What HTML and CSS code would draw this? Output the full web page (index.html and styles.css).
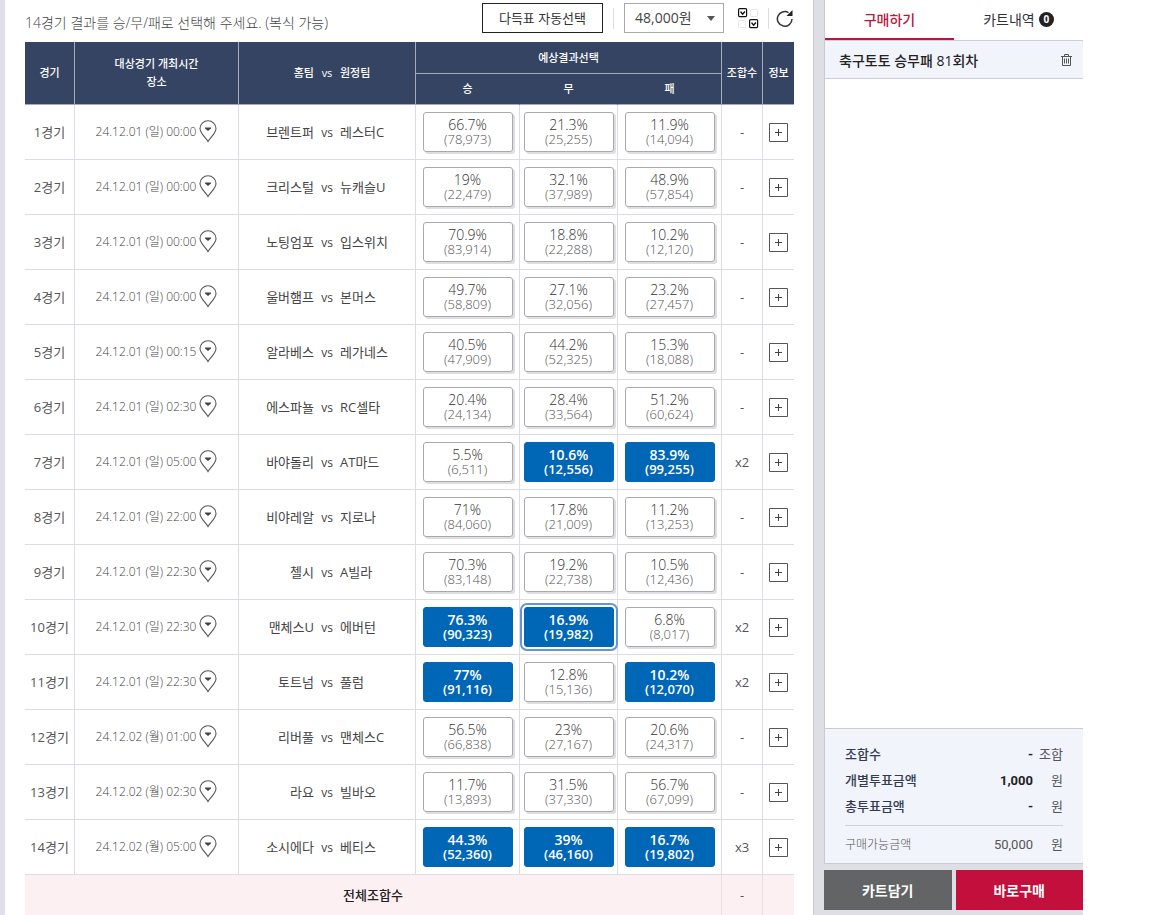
FILE: index.html
```html
<!DOCTYPE html>
<html lang="ko">
<head>
  <meta charset="UTF-8">
  <meta name="viewport" content="width=device-width, initial-scale=1.0">
  <title>축구토토 승무패</title>
  <link rel="stylesheet" href="styles.css">
</head>
<body>

<!-- Shared icons -->
<svg class="sprite" aria-hidden="true">
  <symbol id="icon-pin" viewBox="0 0 18 23">
    <path d="M9 21.5C7.2 17.6 1 13.6 1 8.4a8 7.6 0 0 1 16 0C17 13.6 10.800 17.600 9 21.500Z" fill="none" stroke="#555" stroke-width="1.1"/>
    <path d="M6 7.500h6v1L9 11 6 8.500Z" fill="#444"/>
  </symbol>
  <symbol id="icon-plus" viewBox="0 0 19 19">
    <path d="M.5.5h18v18H.5Z" fill="#fff" stroke="#555"/>
    <path d="M6 9.500h7M9.500 6v7" stroke="#444"/>
  </symbol>
</svg>

<div class="page">
  <!-- Match table -->
  <main class="board">
    <div class="toolbar">
      <p class="guide">14경기 결과를 승/무/패로 선택해 주세요. (복식 가능)</p>
      <button type="button" class="btn-auto">다득표 자동선택</button>
      <span class="divider"></span>
      <div class="amount">
        <select aria-label="금액 선택">
          <option>48,000원</option>
        </select>
      </div>
      <button type="button" class="icon-btn btn-random" aria-label="랜덤 선택">
        <svg width="21" height="21" viewBox="0 0 21 21" fill="none">
          <rect x="12.500" y="1.500" width="7" height="7" rx="1" stroke="#e6e6e6"/>
          <rect x=".5" y="12.500" width="7" height="7" rx="1" stroke="#e6e6e6"/>
          <rect x=".6" y=".6" width="8" height="8" rx="1" stroke="#111" stroke-width="1.200"/>
          <rect x="11.600" y="11.600" width="8" height="8" rx="1" stroke="#111" stroke-width="1.200"/>
          <path d="m2.500 3.600 2.100 2.600 2.300-2.600M13.500 14.600l2.100 2.600 2.300-2.600" stroke="#111" stroke-width="1.500"/>
        </svg>
      </button>
      <span class="divider"></span>
      <button type="button" class="icon-btn btn-reset" aria-label="초기화">
        <svg width="18" height="19" viewBox="0 0 18 19" fill="none">
          <path d="M12.500 3.700A7.300 7.300 0 1 0 16 10" stroke="#333" stroke-width="1.500"/>
          <path d="M16.500 1v6H10.500Z" fill="#222"/>
        </svg>
      </button>
    </div>

    <table class="match-table">
      <colgroup>
        <col class="col-no">
        <col class="col-time">
        <col class="col-team">
        <col class="col-side">
        <col class="col-draw">
        <col class="col-side">
        <col class="col-combo">
        <col class="col-info">
      </colgroup>
      <thead>
        <tr>
          <th rowspan="2">경기</th>
          <th rowspan="2">대상경기 개최시간<br>장소</th>
          <th rowspan="2"><div class="teams"><span>홈팀</span><span>vs</span><span>원정팀</span></div></th>
          <th colspan="3" class="group">예상결과선택</th>
          <th rowspan="2">조합수</th>
          <th rowspan="2">정보</th>
        </tr>
        <tr>
          <th class="sub">승</th>
          <th class="sub">무</th>
          <th>패</th>
        </tr>
      </thead>
      <tbody id="matches"></tbody>
      <tfoot>
        <tr>
          <td colspan="6" class="total">전체조합수</td>
          <td>-</td>
          <td></td>
        </tr>
      </tfoot>
    </table>
  </main>

  <!-- Purchase slip -->
  <aside class="slip">
    <nav class="tabs">
      <a href="#buy" class="tab active">구매하기</a>
      <a href="#cart" class="tab">카트내역 <span class="count">0</span></a>
    </nav>
    <div class="slip-title">
      <h2>축구토토 승무패 81회차</h2>
      <button type="button" class="icon-btn" aria-label="삭제">
        <svg width="11" height="12" viewBox="0 0 11 12" fill="none" stroke="#555">
          <path d="M0 2.500h11M3.500 2V.5h4V2M1.500 3v8.500h8V3M3.500 4.500v5M5.500 4.500v5M7.500 4.500v5"/>
        </svg>
      </button>
    </div>
    <div class="slip-body"></div>
    <dl class="summary">
      <div class="sum-row"><dt>조합수</dt><dd><b>-</b><span>조합</span></dd></div>
      <div class="sum-row"><dt>개별투표금액</dt><dd><b>1,000</b><span>원</span></dd></div>
      <div class="sum-row"><dt>총투표금액</dt><dd><b>-</b><span>원</span></dd></div>
      <div class="sum-row balance"><dt>구매가능금액</dt><dd>50,000<span>원</span></dd></div>
    </dl>
    <div class="slip-actions">
      <button type="button" class="btn-cart">카트담기</button>
      <button type="button" class="btn-buy">바로구매</button>
    </div>
  </aside>
</div>

<script src="script.js"></script>
</body>
</html>
```
FILE: styles.css
```css
/* Global Styles */
* {
  box-sizing: border-box;
}

body {
  margin: 0;
  background-color: #fff;
  color: #555;
  font-family: "Open Sans", "Noto Sans CJK KR", sans-serif;
  font-size: 13px;
}

button,
select {
  font-family: inherit;
  cursor: pointer;
}

.sprite {
  display: none;
}

.page {
  display: grid;
  grid-template-columns: minmax(0, 1fr) 270px;
  min-height: 100vh;
  padding-right: 69px;
}

.board {
  padding: 0 19px 0 20px;
  border-left: 5px solid #dfdeea;
}

/* Toolbar */
.toolbar {
  display: flex;
  align-items: center;
  height: 42px;
  padding-bottom: 6px;
}

.guide {
  flex: 1;
  margin: 0;
  padding-top: 8px;
  color: #444;
  font-size: 14px;
  font-weight: 300;
  white-space: nowrap;
}

.btn-auto {
  width: 121px;
  height: 30px;
  padding: 0 0 2px;
  border: 1px solid #222;
  background-color: #fff;
  color: #333;
  font-size: 13px;
}

.divider {
  width: 1px;
  height: 21px;
  margin: 0 10px;
  background-color: #ddd;
}

.amount {
  position: relative;
}

.amount select {
  width: 100px;
  height: 30px;
  padding: 0 10px 2px;
  border: 1px solid #aaa;
  border-radius: 0;
  background-color: #fff;
  color: #444;
  font-size: 14px;
  appearance: none;
}

.amount::after {
  content: "";
  position: absolute;
  top: 13px;
  right: 9px;
  border: 4px solid transparent;
  border-top: 5px solid #555;
  border-bottom: 0;
  pointer-events: none;
}

.icon-btn {
  display: flex;
  padding: 0;
  border: none;
  background: none;
}

.btn-random {
  margin-left: 14px;
}

.btn-random + .divider {
  margin: 0 7px 0 9px;
}

/* Match Table */
.match-table {
  width: 100%;
  border-collapse: separate;
  border-spacing: 0;
  table-layout: fixed;
  text-align: center;
}

.col-no {
  width: 50px;
}

.col-time {
  width: 164px;
}

.col-side {
  width: 104px;
}

.col-draw {
  width: 98px;
}

.col-combo {
  width: 41px;
}

.col-info {
  width: 31px;
}

.match-table th,
.match-table td {
  padding: 0;
  border-right: 1px solid #dcdce2;
  border-bottom: 1px solid #dcdce2;
}

.match-table th {
  height: 31px;
  border-color: #a3abbc;
  background-color: #354463;
  color: #fff;
  font-size: 11px;
  font-weight: 500;
  line-height: 18px;
}

.match-table .group {
  height: 32px;
}

.match-table .sub {
  border-right-color: #354463;
}

.match-table tbody td {
  height: 55px;
}

.match-table tbody .label {
  padding-bottom: 2px;
}

.match-table tr > :last-child {
  border-right: none;
}

.match-table thead tr + tr > :last-child {
  border-right: 1px solid #a3abbc;
}

.match-table .time {
  color: #444;
  font-size: 12px;
  font-weight: 300;
}

.time div {
  display: flex;
  justify-content: center;
  align-items: center;
  gap: 3px;
}

.teams {
  display: grid;
  grid-template-columns: 1fr 26px 1fr;
  align-items: baseline;
}

.teams :first-child {
  text-align: right;
}

.teams :last-child {
  text-align: left;
}

tbody .teams {
  color: #444;
}

tbody .teams :nth-child(2) {
  font-size: 12px;
}

/* Pick Buttons */
.pick {
  display: inline-block;
  width: 90px;
  height: 40px;
  padding: 0;
  border: 1px solid #aaa;
  border-radius: 3px;
  background-color: #fff;
  box-shadow: 2px 2px 0 #dedee2;
  color: #333;
  font-size: 14px;
  font-weight: 300;
  line-height: 14px;
  vertical-align: middle;
}

.pick span {
  display: block;
  font-size: 13px;
  color: #555;
}

.pick.selected {
  border-color: #0066b6;
  background-color: #0066b6;
  box-shadow: none;
  color: #fff;
  font-weight: 600;
}

.pick.selected span {
  color: #fff;
}

.pick.focused {
  outline: 2px solid #6494dc;
  outline-offset: 2px;
}

.info .icon-btn {
  justify-content: center;
  width: 100%;
}

.match-table tfoot td {
  height: 40px;
  border-bottom: none;
  border-color: #ecdde2;
  background-color: #fdf0f3;
}

.match-table .total {
  padding-bottom: 2px;
  color: #222;
  font-weight: 500;
}

/* Purchase Slip */
.slip {
  position: sticky;
  top: 0;
  display: flex;
  flex-direction: column;
  height: 100vh;
  padding: 0 0 5px 10px;
  border-left: 1px solid #c9cad3;
  background-color: #dedfe5;
}

.tabs {
  display: grid;
  grid-template-columns: 1fr 1fr;
  border-left: 1px solid #c9cad3;
  border-bottom: 1px solid #c9cfdc;
  background-color: #fff;
}

.tab {
  display: flex;
  justify-content: center;
  align-items: center;
  gap: 4px;
  height: 40px;
  border-bottom: 2px solid #fff;
  color: #333;
  font-size: 14px;
  text-decoration: none;
}

.tab.active {
  border-color: #b5173f;
  color: #b5173f;
  font-weight: 500;
}

.count {
  width: 15px;
  height: 15px;
  border-radius: 50%;
  background-color: #222;
  color: #fff;
  font-size: 10px;
  font-weight: 700;
  line-height: 15px;
  text-align: center;
}

.slip-title {
  display: flex;
  justify-content: space-between;
  align-items: center;
  height: 38px;
  padding: 0 11px 0 14px;
  border-left: 1px solid #c9cad3;
  border-bottom: 1px solid #c9cfdc;
  background-color: #f1f4fb;
}

.slip-title h2 {
  margin: 0;
  color: #222;
  font-size: 14px;
  font-weight: 500;
}

.slip-body {
  flex: 1;
  border-left: 1px solid #c9cad3;
  background-color: #fff;
}

.summary {
  margin: 0;
  padding: 12px 20px 0;
  border: 1px solid #c9cad3;
  border-right: none;
  background-color: #f1f4fb;
}

.sum-row {
  display: flex;
  justify-content: space-between;
  align-items: center;
  height: 26px;
  padding-bottom: 2px;
  color: #333b50;
}

.sum-row dt {
  font-weight: 500;
}

.sum-row dd {
  display: flex;
  align-items: baseline;
  margin: 0;
  font-family: Roboto, "Noto Sans CJK KR", sans-serif;
}

.sum-row dd b {
  color: #222;
}

.sum-row dd span {
  width: 30px;
  color: #555;
  text-align: right;
}

.sum-row.balance {
  height: 38px;
  margin-top: 6px;
  border-top: 1px solid #cfd2da;
  color: #555;
}

.balance dt {
  font-size: 12px;
  font-weight: 300;
}

.slip-actions {
  display: grid;
  grid-template-columns: 1fr 1fr;
  gap: 4px;
  margin-top: 6px;
}

.slip-actions button {
  height: 40px;
  padding: 0;
  border: none;
  color: #fff;
  font-size: 14px;
  font-weight: 700;
}

.btn-cart {
  background-color: #636466;
}

.btn-buy {
  background-color: #c20f3b;
}
```
FILE: script.js
```javascript
// date, home, away, [percent, votes] for win / draw / loss, selected picks
const matches = [
  ['24.12.01 (일) 00:00', '브렌트퍼', '레스터C', ['66.7%', '78,973'], ['21.3%', '25,255'], ['11.9%', '14,094'], []],
  ['24.12.01 (일) 00:00', '크리스털', '뉴캐슬U', ['19%', '22,479'], ['32.1%', '37,989'], ['48.9%', '57,854'], []],
  ['24.12.01 (일) 00:00', '노팅엄포', '입스위치', ['70.9%', '83,914'], ['18.8%', '22,288'], ['10.2%', '12,120'], []],
  ['24.12.01 (일) 00:00', '울버햄프', '본머스', ['49.7%', '58,809'], ['27.1%', '32,056'], ['23.2%', '27,457'], []],
  ['24.12.01 (일) 00:15', '알라베스', '레가네스', ['40.5%', '47,909'], ['44.2%', '52,325'], ['15.3%', '18,088'], []],
  ['24.12.01 (일) 02:30', '에스파뇰', 'RC셀타', ['20.4%', '24,134'], ['28.4%', '33,564'], ['51.2%', '60,624'], []],
  ['24.12.01 (일) 05:00', '바야돌리', 'AT마드', ['5.5%', '6,511'], ['10.6%', '12,556'], ['83.9%', '99,255'], [1, 2]],
  ['24.12.01 (일) 22:00', '비야레알', '지로나', ['71%', '84,060'], ['17.8%', '21,009'], ['11.2%', '13,253'], []],
  ['24.12.01 (일) 22:30', '첼시', 'A빌라', ['70.3%', '83,148'], ['19.2%', '22,738'], ['10.5%', '12,436'], []],
  ['24.12.01 (일) 22:30', '맨체스U', '에버턴', ['76.3%', '90,323'], ['16.9%', '19,982'], ['6.8%', '8,017'], [0, 1]],
  ['24.12.01 (일) 22:30', '토트넘', '풀럼', ['77%', '91,116'], ['12.8%', '15,136'], ['10.2%', '12,070'], [0, 2]],
  ['24.12.02 (월) 01:00', '리버풀', '맨체스C', ['56.5%', '66,838'], ['23%', '27,167'], ['20.6%', '24,317'], []],
  ['24.12.02 (월) 02:30', '라요', '빌바오', ['11.7%', '13,893'], ['31.5%', '37,330'], ['56.7%', '67,099'], []],
  ['24.12.02 (월) 05:00', '소시에다', '베티스', ['44.3%', '52,360'], ['39%', '46,160'], ['16.7%', '19,802'], [0, 1, 2]]
];

// match and pick that was clicked last
let focused = [9, 1];

function render() {
  document.getElementById('matches').innerHTML = matches.map((match, row) => {
    const [date, home, away, win, draw, loss, selected] = match;
    const picks = [win, draw, loss].map(([percent, votes], i) => {
      const on = selected.includes(i);
      const focus = focused[0] === row && focused[1] === i;
      return `<td><button type="button" class="pick${on ? ' selected' : ''}${focus ? ' focused' : ''}" data-row="${row}" data-pick="${i}" aria-pressed="${on}">${percent}<span>(${votes})</span></button></td>`;
    }).join('');
    return `<tr>
      <td class="label">${row + 1}경기</td>
      <td class="label time"><div>${date}<svg width="18" height="23"><use href="#icon-pin"/></svg></div></td>
      <td class="label"><div class="teams"><span>${home}</span><span>vs</span><span>${away}</span></div></td>
      ${picks}
      <td>${selected.length ? 'x' + selected.length : '-'}</td>
      <td class="info"><button type="button" class="icon-btn" aria-label="${row + 1}경기 정보"><svg width="19" height="19"><use href="#icon-plus"/></svg></button></td>
    </tr>`;
  }).join('');
}

document.getElementById('matches').addEventListener('click', (e) => {
  const button = e.target.closest('.pick');
  if (!button) return;
  const row = Number(button.dataset.row);
  const pick = Number(button.dataset.pick);
  const selected = matches[row][6];
  const index = selected.indexOf(pick);
  if (index >= 0) {
    selected.splice(index, 1);
  } else {
    selected.push(pick);
  }
  focused = [row, pick];
  render();
});

render();
```
